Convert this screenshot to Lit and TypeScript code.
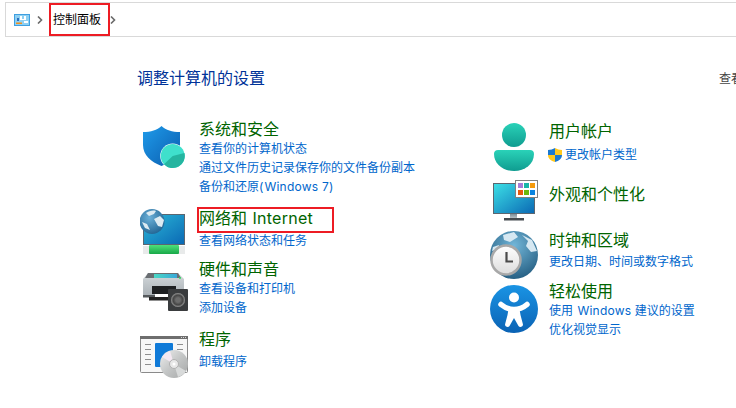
import { LitElement, html, css } from "lit";
import { customElement } from "lit/decorators.js";

const shieldIcon = html`<svg class="ico" viewBox="0 0 48 48">
  <defs><linearGradient id="sh" x1="0" y1="0" x2="1" y2="1"><stop offset="0" stop-color="#1f9bea"/><stop offset="1" stop-color="#0a5cae"/></linearGradient></defs>
  <path d="M21.5 3C26 7 32 9 40 9V22C40 32 32 39 21.5 43C11 39 3 32 3 22V9C11 9 17 7 21.5 3Z" fill="url(#sh)"/>
  <circle cx="32.7" cy="33" r="12.5" fill="#fff"/>
  <circle cx="32.7" cy="33" r="12" fill="#3fe0cc"/>
  <path d="M32.7 33L44.4 30A12 12 0 0 1 24 41.2Z" fill="#25b5a0"/>
</svg>`;

const netIcon = html`<svg class="ico" viewBox="0 0 48 48">
  <defs>
    <linearGradient id="ns" x1="0" y1="0" x2="1" y2="1"><stop offset="0" stop-color="#2cb9d8"/><stop offset="1" stop-color="#0a68b4"/></linearGradient>
    <linearGradient id="ng" x1="0" y1="0" x2="0" y2="1"><stop offset="0" stop-color="#4fe07a"/><stop offset="1" stop-color="#18a848"/></linearGradient>
    <radialGradient id="nb" cx=".4" cy=".35" r=".75"><stop offset="0" stop-color="#6ab0d8"/><stop offset="1" stop-color="#1c5f8e"/></radialGradient>
  </defs>
  <rect x="3.5" y="7.5" width="41" height="30" fill="url(#ns)" stroke="#5b6670"/>
  <rect x="3" y="39" width="42" height="8" fill="#e8eaea"/>
  <rect x="9" y="38" width="30" height="9" rx="1" fill="url(#ng)"/>
  <circle cx="12" cy="14.5" r="12.5" fill="url(#nb)"/>
  <path d="M6 6C9 4 13 3 16 4L14 7L9 9ZM14 12L20 9L24 13L22 20L18 19ZM2 15L7 17L10 23L5 21Z" fill="#dcebf2"/>
</svg>`;

const printerIcon = html`<svg class="ico" viewBox="0 0 48 48">
  <defs>
    <linearGradient id="pb" x1="0" y1="0" x2="0" y2="1"><stop offset="0" stop-color="#d4d9dc"/><stop offset="1" stop-color="#a8afb4"/></linearGradient>
    <linearGradient id="pt" x1="0" y1="0" x2="1" y2="0"><stop offset="0" stop-color="#4ad8c4"/><stop offset="1" stop-color="#38a8d8"/></linearGradient>
    <radialGradient id="ps"><stop offset="0" stop-color="#8a8a8a"/><stop offset=".7" stop-color="#444"/><stop offset="1" stop-color="#999"/></radialGradient>
  </defs>
  <path d="M3 12L8 6H38L44 12V30H3Z" fill="url(#pb)"/>
  <path d="M8 6H38L41 11H5Z" fill="#6a6e72"/>
  <rect x="14" y="7" width="23" height="4" fill="url(#pt)"/>
  <circle cx="40" cy="11" r="1" fill="#30e060"/>
  <rect x="12" y="19" width="24" height="8" fill="#1e2022"/>
  <rect x="3" y="28" width="32" height="2.5" fill="#55595c"/>
  <rect x="9" y="30" width="26" height="3.5" fill="#222"/>
  <rect x="15" y="27" width="15" height="3" fill="#fff"/>
  <rect x="28" y="22" width="20" height="22" rx="1" fill="#3a3c3e"/>
  <circle cx="38" cy="33" r="7" fill="url(#ps)"/>
  <circle cx="38" cy="33" r="2.5" fill="#6c6c6c"/>
</svg>`;

const progIcon = html`<svg class="ico" viewBox="0 0 48 48">
  <defs><linearGradient id="cd" x1="0" y1="0" x2="1" y2="1"><stop offset="0" stop-color="#efefef"/><stop offset=".5" stop-color="#c4c6c6"/><stop offset="1" stop-color="#a4a6a6"/></linearGradient></defs>
  <rect x=".5" y="3.5" width="47" height="36" rx="1" fill="#f7f7f7" stroke="#8a8a8a"/>
  <rect x="0" y="3" width="48" height="3" fill="#6e6e6e"/>
  <g fill="#d8d8d8"><rect x="41" y="4" width="1" height="1"/><rect x="43" y="4" width="1" height="1"/><rect x="45" y="4" width="1" height="1"/></g>
  <g fill="#8e8e8e">
    <rect x="5" y="11" width="6" height="1"/><rect x="5" y="16" width="6" height="1"/><rect x="5" y="21" width="6" height="1"/><rect x="5" y="26" width="6" height="1"/><rect x="5" y="31" width="6" height="1"/>
    <rect x="37" y="11" width="6" height="1"/><rect x="37" y="16" width="6" height="1"/><rect x="37" y="21" width="6" height="1"/>
  </g>
  <rect x="15" y="10" width="18" height="24" rx="1" fill="#0f7ad8"/>
  <circle cx="34" cy="31" r="14" fill="url(#cd)"/>
  <path d="M34 31L22 24A14 14 0 0 1 30 18Z" fill="#f4e8f2"/>
  <path d="M34 31L46 38A14 14 0 0 1 38 44Z" fill="#d8dada"/>
  <circle cx="34" cy="31" r="4.5" fill="#e8e8e8" stroke="#b0b0b0"/>
  <circle cx="34" cy="31" r="1.5" fill="#fff"/>
</svg>`;

const userIcon = html`<svg class="ico" viewBox="0 0 48 48">
  <defs>
    <linearGradient id="u1" x1="0" y1="0" x2="0" y2="1"><stop offset="0" stop-color="#2ad2b8"/><stop offset="1" stop-color="#0f9c90"/></linearGradient>
  </defs>
  <circle cx="24" cy="12" r="12" fill="url(#u1)"/>
  <path d="M8 27H40C42.500 27 44 28.500 44 31C44 41 35 48 24 48C13 48 4 41 4 31C4 28.500 5.500 27 8 27Z" fill="url(#u1)"/>
</svg>`;

const appearIcon = html`<svg class="ico" viewBox="0 0 48 48">
  <defs><linearGradient id="as" x1="0" y1="0" x2="1" y2="1"><stop offset="0" stop-color="#3ce0e6"/><stop offset="1" stop-color="#0a68b4"/></linearGradient>
  <linearGradient id="at" x1="0" y1="0" x2="0" y2="1"><stop offset="0" stop-color="#7e8e98"/><stop offset="1" stop-color="#c4ccd0"/></linearGradient></defs>
  <rect x="3.5" y="7.500" width="41" height="30" fill="url(#as)" stroke="#5b6670"/>
  <rect x="20" y="38" width="7" height="5" fill="url(#at)"/>
  <rect x="14" y="42" width="20" height="2.500" fill="#454b50"/>
  <rect x="25.500" y="4.500" width="22" height="17" fill="#fff" stroke="#808080"/>
  <rect x="28" y="7" width="5" height="5" fill="#a67cd6"/><rect x="34" y="7" width="5" height="5" fill="#17b5a8"/><rect x="40" y="7" width="5" height="5" fill="#f59a0c"/>
  <rect x="28" y="14" width="5" height="5" fill="#e8590c"/><rect x="34" y="14" width="5" height="5" fill="#6cb80a"/><rect x="40" y="14" width="5" height="5" fill="#0a84e0"/>
</svg>`;

const clockIcon = html`<svg class="ico" viewBox="0 0 48 48">
  <defs>
    <radialGradient id="cb" cx=".5" cy=".3" r=".8"><stop offset="0" stop-color="#72b6d8"/><stop offset="1" stop-color="#1c5478"/></radialGradient>
    <linearGradient id="cf" x1="0" y1="0" x2="0" y2="1"><stop offset="0" stop-color="#fff"/><stop offset="1" stop-color="#dcdcdc"/></linearGradient>
  </defs>
  <circle cx="24" cy="24" r="24" fill="url(#cb)"/>
  <path d="M13 4L24 1L28 6L20 11L14 9ZM32 4L42 9L47 20L41 21L36 15L38 10ZM2 20L8 18L9 14L3 16Z" fill="#d6e8f2"/>
  <circle cx="16" cy="29" r="14.500" fill="url(#cf)" stroke="#a8a8a8" stroke-width="2.500"/>
  <path d="M16.500 21V30.500H23" fill="none" stroke="#4a4a4a" stroke-width="2.200"/>
</svg>`;

const accessIcon = html`<svg class="ico" viewBox="0 0 48 48">
  <defs><linearGradient id="ac" x1="0" y1="0" x2="0" y2="1"><stop offset="0" stop-color="#1a94e4"/><stop offset="1" stop-color="#0a62b4"/></linearGradient></defs>
  <circle cx="24" cy="24" r="24" fill="url(#ac)"/>
  <circle cx="24" cy="12.500" r="5" fill="#fff"/>
  <path d="M11 19.500Q17 24.500 24 24.500Q31 24.500 37 19.500" fill="none" stroke="#fff" stroke-width="5.500" stroke-linecap="round"/>
  <path d="M18.500 24H29.500L30.500 30L33 39.500A2.500 2.500 0 0 1 28.500 41L24 33L19.500 41A2.500 2.500 0 0 1 15 39.500L17.500 30Z" fill="#fff"/>
</svg>`;

const uacShield = html`<svg class="uac" viewBox="0 0 14 14">
  <defs><clipPath id="uc"><path d="M7 0C9 1.200 11.500 2 14 2V7C14 10.500 11 13 7 14C3 13 0 10.500 0 7V2C2.500 2 5 1.200 7 0Z"/></clipPath></defs>
  <g clip-path="url(#uc)">
    <rect width="7" height="7" fill="#1a78d0"/><rect x="7" width="7" height="7" fill="#ffc81e"/>
    <rect y="7" width="7" height="7" fill="#ffc81e"/><rect x="7" y="7" width="7" height="7" fill="#1a78d0"/>
  </g>
</svg>`;

const cpIcon = html`<svg class="cp" viewBox="0 0 16 12">
  <rect x=".5" y=".5" width="15" height="11" fill="#8fd0f2" stroke="#3f9fe0"/>
  <rect x="2" y="8.500" width="6" height="1.500" fill="#f09020"/>
  <path d="M6 2H8V5H10V2H12V6H6Z" fill="#fff"/>
  <rect x="3" y="4" width="2" height="3" fill="#2a6fc0"/>
  <rect x="10" y="7" width="4" height="2" fill="#fff"/>
</svg>`;

const chevPath = html`<svg class="chev" viewBox="0 0 6 8"><path d="M1 .5L4.500 4L1 7.500" fill="none" stroke="#6a6a6a" stroke-width="1.600"/></svg>`;

@customElement("app-root")
export class AppRoot extends LitElement {
  static styles = css`
    :host {
      display: block;
      width: 736px;
      height: 408px;
      overflow: hidden;
      background: #fff;
      font-family: Inter, "Noto Sans CJK SC", sans-serif;
    }
    .bar {
      display: flex;
      align-items: center;
      box-sizing: border-box;
      height: 35px;
      margin: 2px 0 0 5px;
      padding-left: 8px;
      border: 1px solid #d9d9d9;
      border-right: none;
    }
    .cp { width: 16px; height: 12px; margin-top: 1px; flex: none; }
    .chev { display: block; width: 6px; height: 8px; flex: none; }
    .sep1 { margin: 0 6px 0 7px; }
    .sep2 { margin-left: 0; }
    .crumb {
      box-sizing: border-box;
      width: 61px;
      height: 33px;
      border: 2px solid #ed1c24;
      padding-left: 2px;
      font-size: 12px;
      line-height: 29px;
      color: #000;
      white-space: nowrap;
    }
    .head {
      display: flex;
      align-items: center;
      height: 24px;
      margin-top: 28px;
      padding-left: 137px;
      overflow: hidden;
      white-space: nowrap;
    }
    .head h1 {
      width: 582px;
      flex: none;
      margin: 0;
      font-size: 16px;
      font-weight: 400;
      color: #003399;
    }
    .head span { font-size: 12px; color: #444; flex: none; }
    .cols {
      display: grid;
      grid-template-columns: 350px 1fr;
      padding-left: 140px;
      margin-top: 13px;
    }
    .col { display: flex; flex-direction: column; }
    .item { display: flex; gap: 11px; align-items: flex-start; }
    .ico { display: block; width: 48px; height: 48px; flex: none; }
    .text { display: flex; flex-direction: column; min-width: 0; }
    .title {
      position: relative;
      font-size: 16px;
      line-height: 21px;
      color: #006400;
      white-space: nowrap;
    }
    .lat { letter-spacing: 0.25px; margin-left: 1px; }
    .boxed::after {
      content: "";
      position: absolute;
      left: -2px;
      top: -1px;
      width: 137px;
      height: 26px;
      box-sizing: border-box;
      border: 2px solid #ed1c24;
    }
    .link {
      display: flex;
      align-items: center;
      gap: 3px;
      font-size: 12px;
      line-height: 19px;
      color: #0066cc;
      white-space: pre;
    }
    .uac { width: 14px; height: 14px; flex: none; margin-left: -1px; }

    .sec { margin-top: 17px; }
    .sec .ico { margin-top: 4px; }
    .sec .title, .hw .title, .acc .title { margin-bottom: -1px; }
    .net { margin-top: 11px; }
    .net .text { margin-top: 1px; }
    .net .link { margin-top: 2px; }
    .hw { margin-top: 4px; }
    .hw .ico { margin-top: 8px; }
    .pr { margin-top: 12px; }
    .pr .ico { margin-top: 4px; }
    .pr .link { margin-top: 2px; }

    .usr { margin-top: 19px; }
    .usr .ico { margin-top: 2px; }
    .usr .link { margin-top: 3px; }
    .app { margin-top: 5px; }
    .app .text { margin-top: 8px; }
    .clk { margin-top: 6px; }
    .clk .ico { margin-top: 1px; }
    .clk .link { margin-top: 1px; }
    .acc { margin-top: 2px; }
    .acc .ico { margin-top: 4px; }
  `;

  render() {
    return html`
      <div class="bar">
        ${cpIcon}
        <div class="sep1">${chevPath}</div>
        <div class="crumb">控制面板</div>
        <div class="sep2">${chevPath}</div>
      </div>
      <div class="head"><h1>调整计算机的设置</h1><span>查看</span></div>
      <div class="cols">
        <div class="col">
          <div class="item sec">${shieldIcon}
            <div class="text">
              <div class="title">系统和安全</div>
              <div class="link">查看你的计算机状态</div>
              <div class="link">通过文件历史记录保存你的文件备份副本</div>
              <div class="link"><span>备份和还原(<span class="lat">Windows 7</span>)</span></div>
            </div>
          </div>
          <div class="item net">${netIcon}
            <div class="text">
              <div class="title boxed">网络和 <span class="lat">Internet</span></div>
              <div class="link">查看网络状态和任务</div>
            </div>
          </div>
          <div class="item hw">${printerIcon}
            <div class="text">
              <div class="title">硬件和声音</div>
              <div class="link">查看设备和打印机</div>
              <div class="link">添加设备</div>
            </div>
          </div>
          <div class="item pr">${progIcon}
            <div class="text">
              <div class="title">程序</div>
              <div class="link">卸载程序</div>
            </div>
          </div>
        </div>
        <div class="col">
          <div class="item usr">${userIcon}
            <div class="text">
              <div class="title">用户帐户</div>
              <div class="link">${uacShield}更改帐户类型</div>
            </div>
          </div>
          <div class="item app">${appearIcon}
            <div class="text">
              <div class="title">外观和个性化</div>
            </div>
          </div>
          <div class="item clk">${clockIcon}
            <div class="text">
              <div class="title">时钟和区域</div>
              <div class="link">更改日期、时间或数字格式</div>
            </div>
          </div>
          <div class="item acc">${accessIcon}
            <div class="text">
              <div class="title">轻松使用</div>
              <div class="link"><span>使用 <span class="lat">Windows</span> 建议的设置</span></div>
              <div class="link">优化视觉显示</div>
            </div>
          </div>
        </div>
      </div>
    `;
  }
}
